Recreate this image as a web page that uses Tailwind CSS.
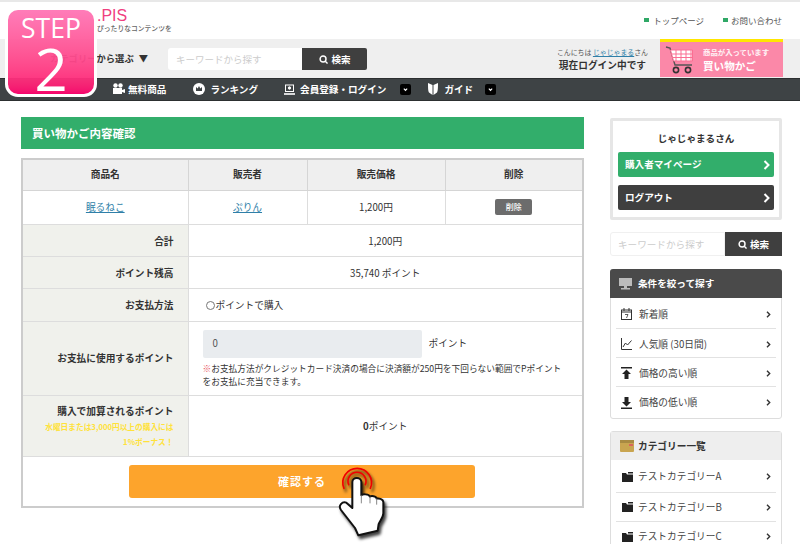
<!DOCTYPE html>
<html lang="ja">
<head>
<meta charset="UTF-8">
<script src="https://cdn.jsdelivr.net/npm/@tailwindcss/browser@4"></script>
</head>
<body class="bg-white">
<div class="relative h-[544px] w-[800px] overflow-hidden bg-white font-['Noto_Sans_CJK_JP','Noto_Sans',sans-serif] text-[9.7px] text-[#333]">

  <!-- Step badge -->
  <div class="absolute left-[5px] top-[7px] z-20 flex h-[90px] w-[92px] flex-col items-center rounded-[13px] border-[3px] border-white bg-gradient-to-b from-[#ff75b5]/95 to-[#ff006f]/95 font-['Open_Sans',sans-serif] text-white">
    <span class="mt-[3px] text-[26.5px] leading-[30px]">STEP</span>
    <span class="-mt-[3px] text-[58px] leading-[58px]">2</span>
  </div>

  <!-- Top header -->
  <header class="flex h-[39px] items-start justify-between border-t-2 border-[#e8e8e8] pl-[97px] pr-[18px]">
    <div>
      <div class="mt-[5px] font-['Liberation_Sans',sans-serif] text-[16px] leading-[17px] text-[#f0407f]">.PIS</div>
      <div class="text-[6.8px] font-medium leading-[9px] text-[#666]">ぴったりなコンテンツを</div>
    </div>
    <nav class="mt-[12px] flex gap-[19px] text-[8.5px] leading-[12px] text-[#555]">
      <a class="flex items-center gap-[4px]"><i class="h-[4px] w-[5px] bg-[#2fa866]"></i>トップページ</a>
      <a class="flex items-center gap-[3px]"><i class="h-[4px] w-[5px] bg-[#2fa866]"></i>お問い合わせ</a>
    </nav>
  </header>

  <!-- Search band -->
  <div class="flex h-[39px] items-start bg-[#efefef] pl-[50px] pr-[17px]">
    <div class="mt-[12px] flex w-[118px] gap-[5px] text-[9.3px] font-bold leading-[14px] text-[#333]"><span>カテゴリーから選ぶ</span><span>▼</span></div>
    <form class="mt-[9px] flex h-[22px] w-[199px]">
      <div class="flex w-[134px] items-center rounded-l-[3px] bg-white pl-[8px] text-[9.5px] text-[#ccc]">キーワードから探す</div>
      <button type="button" class="flex w-[65px] items-center justify-center gap-[3px] rounded-r-[2px] bg-[#3f3f3f] pl-[1px] text-[9.5px] font-bold text-white">
        <svg class="h-[9px] w-[9px]" viewBox="0 0 10 10" fill="none" stroke="white" stroke-width="1.6"><circle cx="4.5" cy="4.5" r="3.3"/><path d="M7 7l2.5 2.5"/></svg>検索
      </button>
    </form>
    <div class="ml-auto mt-[7px] mr-[12px] text-center">
      <div class="text-[6.9px] leading-[12px] text-[#555]">こんにちは <a class="text-[#2f7fa8] underline">じゃじゃまる</a>さん</div>
      <div class="text-[9.7px] font-bold leading-[14px] text-[#333]">現在ログイン中です</div>
    </div>
    <a class="flex h-[38px] w-[123px] items-center border-t-[3px] border-[#ffe600] bg-[#fb88a8] pl-[5px] text-white">
      <svg class="h-[30px] w-[31px] shrink-0" viewBox="0 0 31 30" fill="none">
        <path d="M1 2l4 1 5 17h17" stroke="#555" stroke-width="1.4"/>
        <path d="M5.500 5h22v11h-19z" fill="#fff" stroke="#fb6f93" stroke-width="1"/>
        <path d="M11 5v11M16 5v11M21 5v11M26 5v11M6.500 9h21M7.500 12.500h20" stroke="#fb6f93" stroke-width="1"/>
        <circle cx="11" cy="25" r="2.600" stroke="#333" stroke-width="1.600"/><circle cx="23" cy="25" r="2.600" stroke="#333" stroke-width="1.600"/>
      </svg>
      <div class="ml-[7px]">
        <div class="text-[7.4px] font-bold leading-[12px] text-white/90">商品が入っています</div>
        <div class="text-[10.6px] font-bold leading-[16px]">買い物かご</div>
      </div>
    </a>
  </div>

  <!-- Global nav -->
  <nav class="flex h-[23px] items-center border-b border-[#2c2f30] border-t border-t-[#2c2f30] bg-[#3e4345] pl-[112px] text-[9.6px] font-bold text-white">
    <a class="flex items-center gap-[3px]">
      <svg class="h-[12px] w-[13px]" viewBox="0 0 13 12" fill="white"><circle cx="3.500" cy="2.500" r="2.200"/><circle cx="8.500" cy="2.500" r="2.200"/><rect x="1" y="5" width="9" height="6"/><path d="M10 7l3-1v4l-3-1z"/></svg>
      無料商品
    </a>
    <a class="ml-[27px] flex items-center gap-[5px]">
      <svg class="h-[12px] w-[12px]" viewBox="0 0 12 12"><circle cx="6" cy="6" r="6" fill="white"/><path d="M3 8V4l1.700 1.500L6 3l1.300 2.500L9 4v4z" fill="#3e4345"/></svg>
      ランキング
    </a>
    <a class="ml-[26px] flex items-center gap-[5px]">
      <svg class="h-[11px] w-[11px]" viewBox="0 0 11 11" fill="none" stroke="white"><rect x="1.500" y="1" width="8" height="6.500"/><path d="M0 10h11" stroke-width="1.600"/><circle cx="5.500" cy="4" r="1.200" fill="white"/></svg>
      会員登録・ログイン
    </a>
    <span class="ml-[14px] flex h-[11px] w-[11px] items-center justify-center rounded-[2px] bg-black">
      <svg class="h-[5px] w-[5px]" viewBox="0 0 6 6" fill="none" stroke="white" stroke-width="1.400"><path d="M1 2l2 2 2-2"/></svg>
    </span>
    <a class="ml-[17px] flex items-center gap-[6px]">
      <svg class="h-[12px] w-[10px]" viewBox="0 0 10 12" fill="white"><path d="M0 0l4.500 2V12L1 9.500C.2 8 0 6 0 0zM10 0L5.500 2v10L9 9.500C9.800 8 10 6 10 0z"/></svg>
      ガイド
    </a>
    <span class="ml-[12px] flex h-[11px] w-[11px] items-center justify-center rounded-[2px] bg-black">
      <svg class="h-[5px] w-[5px]" viewBox="0 0 6 6" fill="none" stroke="white" stroke-width="1.400"><path d="M1 2l2 2 2-2"/></svg>
    </span>
  </nav>

  <div class="flex items-start pl-[21px] pt-[16px]">
    <!-- Main column -->
    <main class="w-[563px]">
      <h1 class="flex h-[32px] items-center bg-[#32ae6b] pl-[11px] pt-[2px] text-[11.5px] font-bold text-white">買い物かご内容確認</h1>

      <table class="mt-[9px] w-full table-fixed border-collapse border-2 border-[#ccc] text-center">
        <colgroup>
          <col class="w-[166px]"><col class="w-[119px]"><col class="w-[138px]"><col>
        </colgroup>
        <thead>
          <tr class="h-[31px] bg-[#efefef] font-bold">
            <th class="border border-[#d5d5d5]">商品名</th>
            <th class="border border-[#d5d5d5]">販売者</th>
            <th class="border border-[#d5d5d5]">販売価格</th>
            <th class="border border-[#d5d5d5]">削除</th>
          </tr>
        </thead>
        <tbody>
          <tr class="h-[34px]">
            <td class="border border-[#ddd]"><a class="text-[#2f7fa8] underline">眠るねこ</a></td>
            <td class="border border-[#ddd]"><a class="text-[#2f7fa8] underline">ぷりん</a></td>
            <td class="border border-[#ddd]">1,200円</td>
            <td class="border border-[#ddd]"><span class="inline-block h-[16px] w-[37px] rounded-[2px] bg-[#6c6c6c] text-[8px] font-medium leading-[16px] text-white">削除</span></td>
          </tr>
          <tr class="h-[32px]">
            <th class="border border-[#ddd] bg-[#f0f1ec] pr-[14px] pt-[2px] text-right font-bold">合計</th>
            <td colspan="3" class="border border-[#ddd] pt-[2px]">1,200円</td>
          </tr>
          <tr class="h-[32px]">
            <th class="border border-[#ddd] bg-[#f0f1ec] pr-[14px] pt-[2px] text-right font-bold">ポイント残高</th>
            <td colspan="3" class="border border-[#ddd] pt-[2px]">35,740 ポイント</td>
          </tr>
          <tr class="h-[33px]">
            <th class="border border-[#ddd] bg-[#f0f1ec] pr-[14px] pt-[2px] text-right font-bold">お支払方法</th>
            <td colspan="3" class="border border-[#ddd] pl-[17px] pt-[2px] text-left">
              <span class="flex items-center gap-[1px]"><i class="h-[9px] w-[9px] rounded-full border border-[#777]"></i>ポイントで購入</span>
            </td>
          </tr>
          <tr class="h-[74px]">
            <th class="border border-[#ddd] bg-[#f0f1ec] pr-[14px] text-right font-bold">お支払に使用するポイント</th>
            <td colspan="3" class="border border-[#ddd] pl-[14px] text-left align-top">
              <div class="mt-[8px] flex items-center gap-[7px]">
                <span class="flex h-[28px] w-[219px] items-center rounded-[2px] bg-[#e9ecef] pl-[10px] text-[#555]">0</span>
                <span>ポイント</span>
              </div>
              <p class="mt-[4px] text-[8.7px] leading-[13px]"><span class="text-[#e8505b]">※</span>お支払方法がクレジットカード決済の場合に決済額が250円を下回らない範囲でPポイント<br>をお支払に充当できます。</p>
            </td>
          </tr>
          <tr class="h-[61px]">
            <th class="border border-[#ddd] bg-[#f0f1ec] pr-[14px] pt-[2px] text-right font-bold">
              購入で加算されるポイント
              <div class="mt-[1px] text-[7.7px] leading-[15px] text-[#ffe23a]">水曜日または3,000円以上の購入には<br>1%ボーナス！</div>
            </th>
            <td colspan="3" class="border border-[#ddd] pt-[2px]"><b>0</b>ポイント</td>
          </tr>
          <tr class="h-[51px]">
            <td colspan="4" class="align-top">
              <button type="button" class="ml-[106px] mt-[8px] block h-[33px] w-[346px] rounded-[3px] bg-[#fda42c] text-[11px] font-bold tracking-[1px] text-white">確認する</button>
            </td>
          </tr>
        </tbody>
      </table>
    </main>

    <!-- Sidebar -->
    <aside class="ml-[26px] w-[172px]">
      <div class="mt-[1px] rounded-[2px] border-[3px] border-[#e6e6e6] px-[5px] pb-[7px]">
        <div class="pt-[7px] text-center text-[9.6px] font-bold leading-[20px]">じゃじゃまるさん</div>
        <a class="mt-[4px] flex h-[25px] items-center justify-between rounded-[2px] bg-[#32ae6b] pl-[7px] pr-[4px] text-[9.6px] font-bold text-white">購入者マイページ
          <svg class="h-[10px] w-[7px]" viewBox="0 0 7 10" fill="none" stroke="white" stroke-width="2"><path d="M1.500 1l4 4-4 4"/></svg>
        </a>
        <a class="mt-[8px] flex h-[25px] items-center justify-between rounded-[2px] bg-[#3f3f3f] pl-[7px] pr-[4px] text-[9.6px] font-bold text-white">ログアウト
          <svg class="h-[10px] w-[7px]" viewBox="0 0 7 10" fill="none" stroke="white" stroke-width="2"><path d="M1.500 1l4 4-4 4"/></svg>
        </a>
      </div>

      <form class="mt-[12px] flex h-[24px]">
        <div class="flex w-[115px] items-center rounded-l-[3px] border border-[#f0f0f0] pl-[7px] text-[9.6px] text-[#ccc]">キーワードから探す</div>
        <button type="button" class="flex w-[57px] items-center justify-center gap-[3px] bg-[#3f3f3f] text-[9.5px] font-bold text-white">
          <svg class="h-[9px] w-[9px]" viewBox="0 0 10 10" fill="none" stroke="white" stroke-width="1.600"><circle cx="4.500" cy="4.500" r="3.300"/><path d="M7 7l2.500 2.500"/></svg>検索
        </button>
      </form>

      <section class="mt-[13px] h-[150px] rounded-[3px] border border-[#ddd]">
        <h2 class="-m-px flex h-[29px] items-center gap-[6px] rounded-t-[3px] bg-[#4a4a4a] pl-[9px] text-[9.6px] font-bold text-white">
          <svg class="h-[12px] w-[13px]" viewBox="0 0 13 12" fill="#bbb"><rect x="0" y="0" width="13" height="8"/><rect x="5" y="8" width="3" height="2"/><rect x="2" y="10" width="9" height="1.500"/></svg>
          条件を絞って探す
        </h2>
        <ul class="px-[5px] text-[#444]">
          <li class="flex h-[32px] items-center border-b border-[#e2e2e2] px-[5px] pt-[3px]">
            <svg class="mr-[7px] h-[12px] w-[11px]" viewBox="0 0 11 12" fill="none" stroke="#333"><rect x=".5" y="2" width="10" height="9.500"/><path d="M3 0v3M8 0v3M.5 4h10"/><path d="M4 6.500h3L5.500 10" stroke-width=".8"/></svg>
            新着順
            <svg class="ml-auto h-[7px] w-[5px]" viewBox="0 0 5 7" fill="none" stroke="#333" stroke-width="1.400"><path d="M1 .8l2.700 2.700L1 6.200"/></svg>
          </li>
          <li class="flex h-[29px] items-center border-b border-[#e2e2e2] px-[5px] pt-[2px]">
            <svg class="mr-[7px] h-[12px] w-[11px]" viewBox="0 0 11 12" fill="none" stroke="#333"><path d="M.5 0v11.500H11"/><path d="M2 9l2.500-4 2 2L10.500 2.500"/></svg>
            人気順 (30日間)
            <svg class="ml-auto h-[7px] w-[5px]" viewBox="0 0 5 7" fill="none" stroke="#333" stroke-width="1.400"><path d="M1 .8l2.700 2.700L1 6.200"/></svg>
          </li>
          <li class="flex h-[29px] items-center border-b border-[#e2e2e2] px-[5px] pt-[2px]">
            <svg class="mr-[7px] h-[12px] w-[11px]" viewBox="0 0 11 12" fill="#222"><rect y="0" width="11" height="1.500"/><path d="M5.500 2.500L10 7H7.500v5h-4V7H1z"/></svg>
            価格の高い順
            <svg class="ml-auto h-[7px] w-[5px]" viewBox="0 0 5 7" fill="none" stroke="#333" stroke-width="1.400"><path d="M1 .8l2.700 2.700L1 6.200"/></svg>
          </li>
          <li class="flex h-[29px] items-center px-[5px] pt-[2px]">
            <svg class="mr-[7px] h-[12px] w-[11px]" viewBox="0 0 11 12" fill="#222"><rect y="10.500" width="11" height="1.500"/><path d="M5.500 9.500L10 5H7.500V0h-4v5H1z"/></svg>
            価格の低い順
            <svg class="ml-auto h-[7px] w-[5px]" viewBox="0 0 5 7" fill="none" stroke="#333" stroke-width="1.400"><path d="M1 .8l2.700 2.700L1 6.200"/></svg>
          </li>
        </ul>
      </section>

      <section class="mt-[12px] rounded-[3px] border border-[#ddd]">
        <h2 class="flex h-[28px] items-center gap-[4px] bg-[#eee] pl-[9px] font-bold">
          <svg class="h-[12px] w-[14px]" viewBox="0 0 14 12"><rect width="14" height="12" rx="1" fill="#c9a550"/><rect y="0" width="14" height="3" fill="#a88a42"/><rect x="9" y="4" width="4" height="2" fill="#d9645a"/></svg>
          カテゴリー一覧
        </h2>
        <ul class="px-[5px] text-[#444]">
          <li class="flex h-[33px] items-center border-b border-[#e2e2e2] pl-[6px] pr-[5px] pt-[1px]">
            <svg class="mr-[5px] h-[10px] w-[11px]" viewBox="0 0 11 10" fill="#222"><path d="M0 1h4l1 1.500h6V10H0z"/><rect x="6" y="0" width="5" height="1.500"/></svg>
            テストカテゴリーA
            <svg class="ml-auto h-[7px] w-[5px]" viewBox="0 0 5 7" fill="none" stroke="#333" stroke-width="1.400"><path d="M1 .8l2.700 2.700L1 6.200"/></svg>
          </li>
          <li class="flex h-[29px] items-center border-b border-[#e2e2e2] pl-[6px] pr-[5px]">
            <svg class="mr-[5px] h-[10px] w-[11px]" viewBox="0 0 11 10" fill="#222"><path d="M0 1h4l1 1.500h6V10H0z"/><rect x="6" y="0" width="5" height="1.500"/></svg>
            テストカテゴリーB
            <svg class="ml-auto h-[7px] w-[5px]" viewBox="0 0 5 7" fill="none" stroke="#333" stroke-width="1.400"><path d="M1 .8l2.700 2.700L1 6.200"/></svg>
          </li>
          <li class="flex h-[29px] items-center pl-[6px] pr-[5px]">
            <svg class="mr-[5px] h-[10px] w-[11px]" viewBox="0 0 11 10" fill="#222"><path d="M0 1h4l1 1.500h6V10H0z"/><rect x="6" y="0" width="5" height="1.500"/></svg>
            テストカテゴリーC
            <svg class="ml-auto h-[7px] w-[5px]" viewBox="0 0 5 7" fill="none" stroke="#333" stroke-width="1.400"><path d="M1 .8l2.700 2.700L1 6.200"/></svg>
          </li>
        </ul>
      </section>
    </aside>
  </div>

  <!-- Pointer hand over the confirm button -->
  <svg class="absolute left-[320px] top-[450px] z-10 h-[94px] w-[80px] drop-shadow-[2px_3px_1.500px_rgba(0,0,0,0.75)]" viewBox="0 0 240 282" fill="none">
    <path d="M72 115A43 43 0 1 1 151 115" stroke="#f00000" stroke-width="5" stroke-linecap="round"/>
    <path d="M86 104A27 27 0 1 1 136 104" stroke="#f00000" stroke-width="5" stroke-linecap="round"/>
    <path d="M97 96c0-16 27-16 27 0v40c2-5 24-4 26 4 3-3 19-3 20 6 5-2 19 0 20 10v34c0 12-10 22-14 32l-3 20-58 14-10-22-42-54c-10-14 4-26 16-22l18 16z" fill="#fff" stroke="#111" stroke-width="6" stroke-linejoin="round"/>
    <path d="M124 136v24M150 140v20M170 146v18" stroke="#888" stroke-width="3"/>
  </svg>
</div>
</body>
</html>
